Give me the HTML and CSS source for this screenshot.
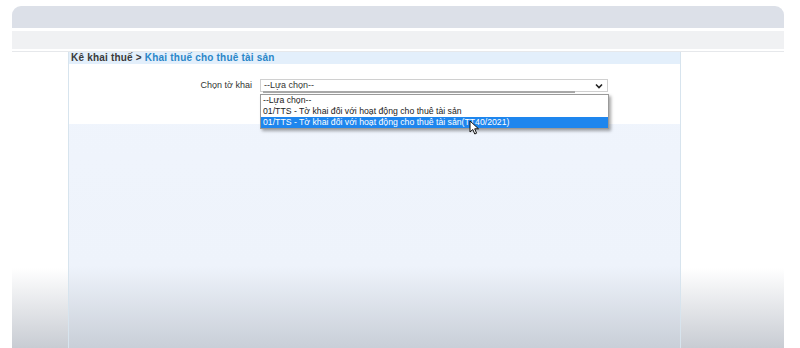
FILE: index.html
```html
<!DOCTYPE html>
<html lang="vi">
<head>
<meta charset="utf-8">
<title>Kê khai thuế</title>
<link rel="stylesheet" href="styles.css">
</head>
<body>
<div class="screen">
  <div class="topbar"></div>
  <div class="subbar"></div>
  <div class="rule"></div>
  <div class="panel">
    <div class="crumb"><span class="crumb-root">Kê khai thuế &gt; </span><span class="crumb-leaf">Khai thuế cho thuê tài sản</span></div>
    <div class="form">
      <div class="row">
        <label class="label">Chọn tờ khai</label>
        <div class="select-wrap">
          <div class="select">
            <span class="select-text">--Lựa chọn--</span>
            <svg class="chev" width="8" height="6" viewBox="0 0 8 6"><path d="M1 1.5 L4 4.5 L7 1.5" fill="none" stroke="#222" stroke-width="1.6"/></svg>
          </div>
          <ul class="dropdown">
            <li class="opt">--Lựa chọn--</li>
            <li class="opt">01/TTS - Tờ khai đối với hoạt động cho thuê tài sản</li>
            <li class="opt opt-active">01/TTS - Tờ khai đối với hoạt động cho thuê tài sản(TT40/2021)</li>
          </ul>
          <svg class="cursor" width="11" height="15" viewBox="0 0 11 15"><path d="M1 1 L1 12 L3.8 9.5 L5.8 14 L7.6 13.2 L5.7 8.8 L9.5 8.8 Z" fill="#fff" stroke="#111" stroke-width="1" stroke-linejoin="round"/></svg>
        </div>
      </div>
    </div>
    <div class="body"></div>
  </div>
</div>
</body>
</html>
```
FILE: styles.css
```css
* { box-sizing: border-box; }
html, body { margin: 0; padding: 0; }
body {
  background: #fff;
  width: 800px;
  height: 348px;
  overflow: hidden;
  font-family: "Liberation Sans", Arial, sans-serif;
}
.screen {
  margin: 0 16px 0 12px;
  padding-top: 6px;
  height: 348px;
  display: flex;
  flex-direction: column;
  background: linear-gradient(to bottom, #ffffff 0, #ffffff 268px, #c8ccd3 348px);
}
.topbar {
  height: 22px;
  background: #dce0e8;
  border-radius: 9px 9px 0 0;
}
.subbar {
  margin-top: 3px;
  height: 18px;
  background: #f0f1f3;
}
.rule {
  margin-top: 2px;
  height: 1px;
  background: #e6e8eb;
}
.panel {
  margin-left: 56px;
  width: 613px;
  flex: 1;
  display: flex;
  flex-direction: column;
  border-left: 1px solid #d7e4ee;
  border-right: 1px solid #d7e4ee;
  background: linear-gradient(to bottom, #f0f5fd 0, #eef3fb 214px, #c9cfd8 295px);
}
.crumb {
  height: 12px;
  background: #e3effb;
  font-size: 10px;
  font-weight: bold;
  line-height: 12px;
  padding-left: 2px;
  letter-spacing: 0.2px;
  white-space: nowrap;
}
.crumb-root { color: #3a3a3a; }
.crumb-leaf { color: #2a86c8; }
.form {
  height: 60px;
  background: #fff;
  padding-top: 15px;
}
.row {
  display: flex;
  align-items: flex-start;
}
.label {
  width: 183px;
  text-align: right;
  font-size: 9px;
  color: #333;
  line-height: 12px;
}
.select-wrap {
  position: relative;
  margin-left: 8px;
}
.select {
  position: relative;
  width: 348px;
  height: 13px;
  border: 1px solid #d0d0d0;
  background: #fff;
  display: flex;
  align-items: center;
  justify-content: space-between;
  padding: 0 4px 0 3px;
}
.select::after {
  content: "";
  position: absolute;
  left: 2px;
  top: 11px;
  width: 312px;
  height: 2px;
  background: #a8a8a8;
}
.select-text {
  font-size: 9px;
  color: #333;
  line-height: 11px;
}
.chev { display: block; }
.dropdown {
  position: absolute;
  left: 0;
  top: 15px;
  width: 349px;
  margin: 0;
  padding: 0;
  list-style: none;
  background: #fff;
  border: 1px solid #9a9a9a;
  box-shadow: 2px 2px 3px rgba(0,0,0,0.35);
}
.opt {
  height: 11px;
  line-height: 11px;
  font-size: 8.7px;
  color: #222;
  padding-left: 2px;
  white-space: nowrap;
}
.opt-active {
  background: #1e86ee;
  color: #fff;
}
.cursor {
  position: absolute;
  left: 209px;
  top: 41px;
}
.body { flex: 1; }
```
